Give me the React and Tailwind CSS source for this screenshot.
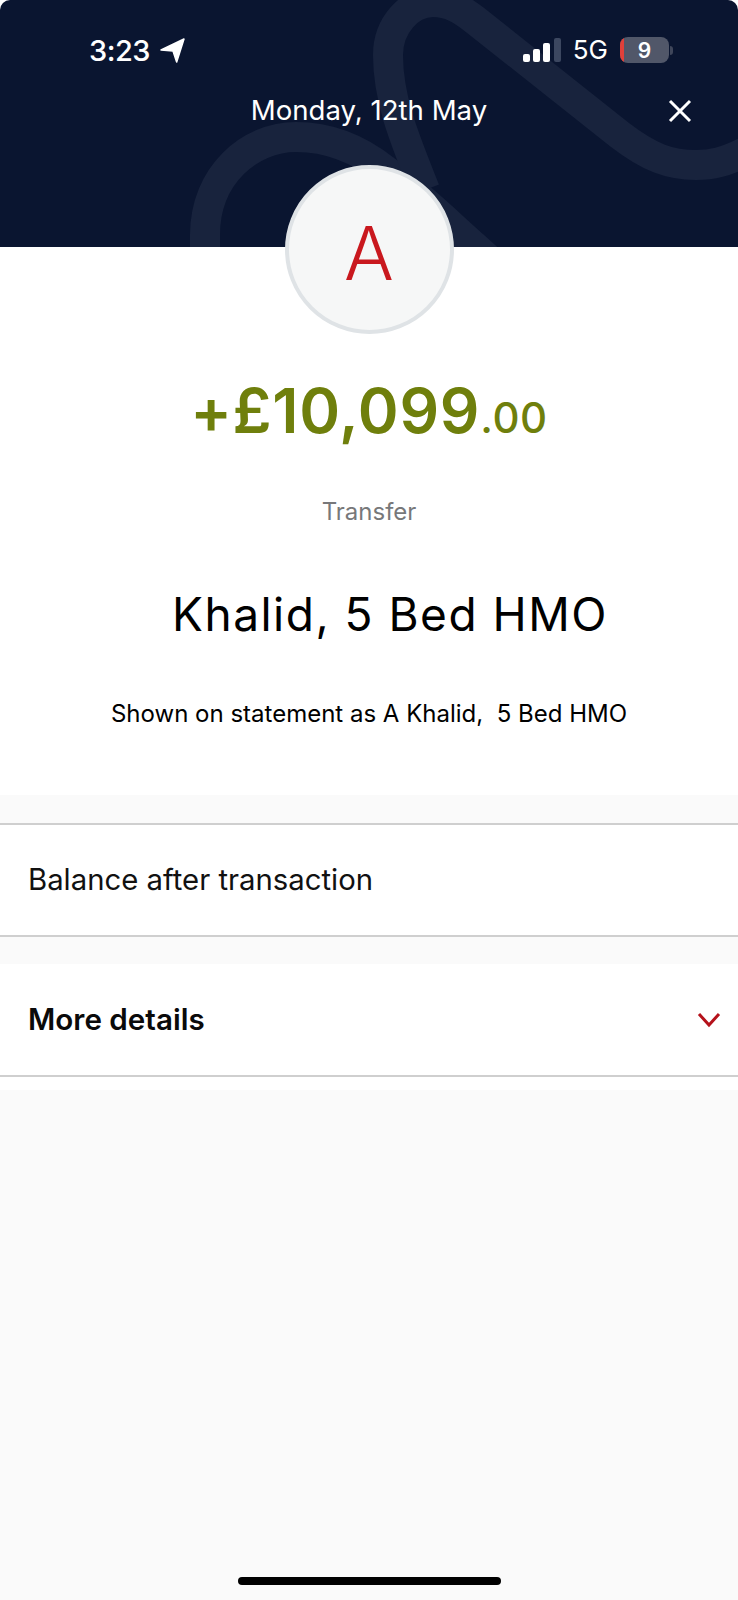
const F = { fontFamily: "Inter, 'Noto Sans', sans-serif" };

export default function App() {
  return (
    <div style={F} className="w-[738px] h-[1600px] bg-[#fafafa] flex flex-col overflow-hidden relative">
      <div className="bg-white">
        <header className="relative h-[247px] bg-[#0a1530] rounded-t-[10px] overflow-hidden text-white">
          <svg className="absolute inset-0" width="738" height="247" viewBox="0 0 738 247" fill="none">
            <path d="M205 270V235C205 175 250 137 296 137C330 137 360 150 385 170C420 195 450 225 475 247L530 297" stroke="#18233d" strokeWidth="30" />
            <path d="M425 190C405 140 388 100 388 55C388 25 410 2 433 2C450 2 462 10 475 20L620 135C650 158 670 165 696 165C712 165 725 162 745 152" stroke="#18233d" strokeWidth="30" />
          </svg>
          <div className="relative flex items-center justify-between pl-[89px] pr-[65px] pt-[24px] h-[76px]">
            <div className="flex items-center gap-[10px]">
              <span className="text-[29px] leading-none font-medium tracking-[-0.5px]">3:23</span>
              <svg width="25" height="25" viewBox="0 0 24 24" className="mt-[1px]"><path d="M1 11.5 23 1 16 23 12.5 12.5Z" fill="#fff" stroke="#fff" strokeWidth="1.5" strokeLinejoin="round" /></svg>
            </div>
            <div className="flex items-center">
              <svg width="38" height="24" viewBox="0 0 38 24">
                <rect x="0" y="16" width="7" height="8" rx="2" fill="#fff" />
                <rect x="10" y="11" width="7" height="13" rx="2" fill="#fff" />
                <rect x="20" y="5" width="7" height="19" rx="2" fill="#fff" />
                <rect x="31" y="0" width="7" height="24" rx="2" fill="#3c4760" />
              </svg>
              <span className="ml-[12px] text-[26px] leading-none font-normal">5G</span>
              <div className="ml-[12px] w-[49px] h-[26px] rounded-[8px] bg-[#515769] overflow-hidden relative flex items-center justify-center">
                <div className="absolute left-0 top-0 bottom-0 w-[4px] bg-[#e0403a]" />
                <span className="text-[21px] leading-none font-semibold">9</span>
              </div>
              <div className="ml-[1px] w-[3px] h-[9px] rounded-r-full bg-[#3f465a]" />
            </div>
          </div>
          <div className="relative flex items-center justify-center h-[56px] mt-[7px]">
            <span className="text-[27.6px] leading-none">Monday, 12th May</span>
            <svg className="absolute right-[46px] top-[16px]" width="24" height="24" viewBox="0 0 24 24" fill="none"><path d="M2 2 22 22M22 2 2 22" stroke="#fff" strokeWidth="3" /></svg>
          </div>
        </header>

        <section className="h-[548px] flex flex-col items-center">
          <div className="relative z-10 -mt-[82px] w-[169px] h-[169px] rounded-full bg-[#f6f7f7] border-[4px] border-[#dfe3e6] flex items-center justify-center">
            <span className="text-[74px] leading-none text-[#c9181e] font-light mt-[6px]">A</span>
          </div>
          <div className="mt-[44px] h-[66px] flex items-baseline text-[#6f7f0c] font-semibold">
            <span className="text-[62px] leading-[66px] tracking-[0.7px]">+£10,099</span>
            <span className="text-[42px] leading-[66px] font-medium tracking-[0.6px]">.00</span>
          </div>
          <div className="mt-[53px] text-[24px] leading-[30px] text-[#77787a]">Transfer</div>
          <div className="mt-[57px] pl-[42px] text-[46px] leading-[60px] text-black tracking-[1.5px]">Khalid,&nbsp;5 Bed HMO</div>
          <div className="mt-[55px] text-[24px] leading-[30px] text-black">Shown on statement as A Khalid,&nbsp; 5 Bed HMO</div>
        </section>
      </div>

      <div className="h-[28px]" />
      <div className="h-[114px] bg-white border-y-2 border-[#cfcfcf] flex items-center pl-[28px]">
        <span className="text-[29.3px] leading-none text-[#111]">Balance after transaction</span>
      </div>
      <div className="h-[27px]" />
      <div className="h-[113px] bg-white border-b-2 border-[#cfcfcf] flex items-center justify-between pl-[28px] pr-[17px]">
        <span className="text-[29.6px] leading-none font-semibold text-[#0a0a0a]">More details</span>
        <svg width="24" height="16" viewBox="0 0 24 16" fill="none"><path d="M2 2 12 13 22 2" stroke="#b5121b" strokeWidth="3" /></svg>
      </div>
      <div className="h-[13px] bg-white" />

      <div className="absolute left-[238px] bottom-[15px] w-[263px] h-[8px] rounded-full bg-black" />
    </div>
  );
}
